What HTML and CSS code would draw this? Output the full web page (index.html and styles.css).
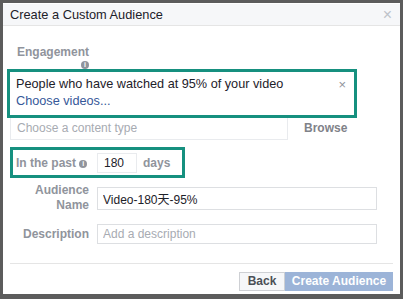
FILE: index.html
```html
<!DOCTYPE html>
<html>
<head>
  <meta name="viewport" content="width=device-width, initial-scale=1.0">
  <link rel="stylesheet" href="styles.css">
</head>
<body>
  <div class="dialog">
    <div class="dialog-header">
      <h2>Create a Custom Audience</h2>
      <span class="close">&times;</span>
    </div>

    <div class="dialog-body">
      <div class="row engagement-row">
        <label class="field-label">Engagement <span class="info">i</span></label>
      </div>

      <div class="highlight selection">
        <div class="selection-text">
          <div class="selection-title">People who have watched at 95% of your video</div>
          <a class="link" href="#">Choose videos...</a>
        </div>
        <span class="selection-close">&times;</span>
      </div>

      <div class="content-row">
        <input type="text" class="content-input" placeholder="Choose a content type">
        <span class="browse">Browse</span>
      </div>

      <div class="highlight past">
        <span class="past-label">In the past <span class="info">i</span></span>
        <input type="text" class="days-input" value="180">
        <span class="days">days</span>
      </div>

      <div class="row name-row">
        <label class="field-label">Audience<br>Name</label>
        <input type="text" class="text-input" value="Video-180天-95%">
      </div>

      <div class="row">
        <label class="field-label">Description</label>
        <input type="text" class="text-input desc-input" placeholder="Add a description">
      </div>
    </div>

    <div class="dialog-footer">
      <button class="btn back">Back</button>
      <button class="btn create">Create Audience</button>
    </div>
  </div>
</body>
</html>
```

FILE: styles.css
```css
* {
  box-sizing: border-box;
  margin: 0;
  padding: 0;
}

body {
  background-color: #5c5c5c;
  font-family: "Liberation Sans", Arial, "Noto Sans CJK SC", sans-serif;
  font-size: 12px;
  padding: 3px 3px 5px 3px;
}

.dialog {
  width: 397px;
  height: 291px;
  background-color: #fff;
  display: flex;
  flex-direction: column;
}

.dialog-header {
  height: 22px;
  margin-top: 1px;
  background-color: #f6f7f9;
  border-bottom: 1px solid #e5e5e5;
  display: flex;
  align-items: center;
  justify-content: space-between;
  padding: 0 8px 0 7px;
}

.dialog-header h2 {
  font-size: 12.8px;
  font-weight: normal;
  color: #1d2129;
}

.close {
  color: #bec2c9;
  font-size: 16px;
}

.dialog-body {
  padding: 20px 0 0 4px;
  flex: 1;
}

.row {
  display: flex;
  align-items: center;
  margin-bottom: 11px;
}

.field-label {
  width: 82px;
  text-align: right;
  color: #90949c;
  font-weight: bold;
  font-size: 12px;
  line-height: 15px;
  margin-right: 8px;
}

.engagement-row {
  margin-bottom: 0;
}

.engagement-row .field-label {
  line-height: 12px;
}

.info {
  display: inline-block;
  width: 8px;
  height: 8px;
  border-radius: 50%;
  background-color: #90949c;
  color: #fff;
  font-size: 7px;
  line-height: 8px;
  text-align: center;
  vertical-align: 1px;
}

.highlight {
  border: 3px solid #16907f;
}

.selection {
  width: 350px;
  height: 49px;
  margin-top: -1px;
  display: flex;
  justify-content: space-between;
  padding: 4px 8px 0 6px;
  position: relative;
  z-index: 1;
}

.selection-title {
  color: #1d2129;
  font-size: 12.7px;
  line-height: 17px;
}

.link {
  color: #365899;
  text-decoration: none;
  font-size: 12.7px;
  line-height: 17px;
}

.selection-close {
  color: #90949c;
  font-size: 13px;
  line-height: 17px;
}

.content-row {
  display: flex;
  align-items: center;
  margin: -2px 0 7px 3px;
}

.content-input {
  width: 278px;
  height: 24px;
  border: 1px solid #e9ebee;
  border-top: none;
  padding: 0 6px;
  font-family: inherit;
  font-size: 12px;
}

.content-input::placeholder,
.text-input::placeholder {
  color: #a7abb2;
}

.browse {
  margin-left: 16px;
  color: #7f8289;
  font-weight: bold;
  font-size: 12px;
}

.past {
  width: 175px;
  height: 31px;
  margin: 0 0 5px 3px;
  display: flex;
  align-items: center;
  padding-left: 3px;
}

.past-label {
  width: 81px;
  color: #90949c;
  font-weight: bold;
}

.days-input {
  width: 40px;
  height: 20px;
  border: 1px solid #e9ebee;
  padding: 0 6px;
  font-family: inherit;
  font-size: 12px;
  color: #1d2129;
}

.days {
  margin-left: 6px;
  color: #90949c;
  font-weight: bold;
}

.text-input {
  width: 280px;
  height: 23px;
  border: 1px solid #dddfe2;
  padding: 0 5px;
  font-family: inherit;
  font-size: 12px;
  color: #1d2129;
}

.desc-input {
  height: 20px;
}

.dialog-footer {
  margin: 0 7px;
  border-top: 1px solid #e5e5e5;
  height: 31px;
  display: flex;
  justify-content: flex-end;
  align-items: center;
  padding-top: 4px;
}

.btn {
  height: 19px;
  font-family: inherit;
  font-size: 12px;
  font-weight: bold;
  padding: 0 4px;
  white-space: nowrap;
  cursor: pointer;
}

.back {
  width: 46px;
  background-color: #f6f7f9;
  border: 1px solid #ced0d4;
  color: #4b4f56;
}

.create {
  width: 108px;
  background-color: #9cb4d8;
  border: 1px solid #9cb4d8;
  color: #fff;
}
```
